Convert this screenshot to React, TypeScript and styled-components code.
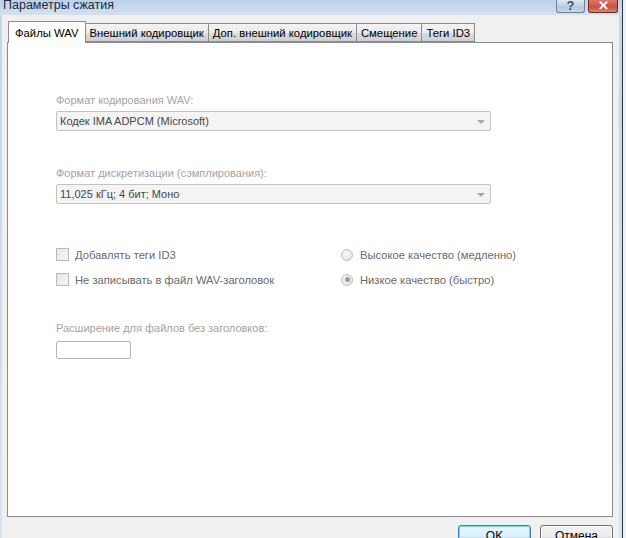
import React from 'react'
import styled, { createGlobalStyle } from 'styled-components'

const GlobalStyle = createGlobalStyle`
  html, body {
    margin: 0;
    padding: 0;
    background: #e8eef6;
  }
  body {
    font-family: "Liberation Sans", Arial, sans-serif;
    font-size: 11px;
  }
`

const Screen = styled.div`
  width: 626px;
  height: 538px;
  overflow: hidden;
  display: flex;
  background: #f4f7fb;
`

const Frame = styled.div`
  width: 622px;
  height: 538px;
  display: flex;
  flex-direction: column;
  background: linear-gradient(180deg, #c3d5ea 0%, #d6e3f2 100%);
  border-right: 1px solid #2b3440;
  flex-shrink: 0;
`

const TitleBar = styled.div`
  height: 15px;
  display: flex;
  align-items: flex-end;
  padding-left: 3px;
  background: linear-gradient(180deg, #bcd0e8 0%, #d3e1f1 100%);
`

const Title = styled.span`
  font-size: 12.5px;
  line-height: 13px;
  color: #1e2a3a;
  flex: 1;
  margin-bottom: 3px;
`

const Caption = styled.div`
  display: flex;
  gap: 3px;
  align-self: flex-start;
  margin-right: 4px;
`

const CaptionButton = styled.div<{ $close?: boolean }>`
  width: ${p => (p.$close ? 30 : 29)}px;
  height: 13px;
  box-sizing: border-box;
  border: 1px solid ${p => (p.$close ? '#6b2a22' : '#6f7f95')};
  border-top: none;
  border-radius: 0 0 3px 3px;
  display: flex;
  align-items: flex-end;
  justify-content: center;
  background: ${p =>
    p.$close
      ? 'linear-gradient(180deg, #d8796c 0%, #c9503f 60%, #d98a70 100%)'
      : 'linear-gradient(180deg, #dfe8f3 0%, #b8c9de 60%, #c8d7e9 100%)'};
  color: ${p => (p.$close ? '#fff' : '#44536a')};
  font-size: 13px;
  line-height: 13px;
  font-weight: bold;
`

const Body = styled.div`
  flex: 1;
  display: flex;
  padding-left: 2px;
  padding-right: 3px;
`

const Client = styled.div`
  flex: 1;
  background: #f0f0f0;
  display: flex;
  flex-direction: column;
  padding: 6px 6px 0 5px;
`

const TabStrip = styled.div`
  display: flex;
  align-items: flex-end;
  height: 21px;
  padding-left: 1px;
  position: relative;
  z-index: 1;
`

const Tab = styled.div<{ $active?: boolean }>`
  box-sizing: border-box;
  height: ${p => (p.$active ? 22 : 19)}px;
  margin-bottom: ${p => (p.$active ? -1 : 0)}px;
  padding: 0 ${p => (p.$active ? 6 : 4)}px;
  margin-left: ${p => (p.$active ? 0 : -1)}px;
  border: 1px solid #898c95;
  border-bottom: ${p => (p.$active ? 'none' : '1px solid #898c95')};
  background: ${p =>
    p.$active ? '#fff' : 'linear-gradient(180deg, #f3f3f3 0%, #ebebeb 50%, #dddddd 51%, #cfcfcf 100%)'};
  display: flex;
  align-items: center;
  color: #000;
  font-size: 11.3px;
  white-space: nowrap;
  &:first-child {
    margin-left: 0;
  }
`

const Panel = styled.div`
  height: 475px;
  box-sizing: border-box;
  background: #fff;
  border: 1px solid #898c95;
  padding: 50px 0 0 48px;
  display: flex;
  flex-direction: column;
`

const FieldLabel = styled.div<{ $gap: number }>`
  margin-top: ${p => p.$gap}px;
  color: #a3a3a3;
  font-size: 11px;
  line-height: 14px;
  height: 14px;
`

const Select = styled.div`
  margin-top: 4px;
  width: 435px;
  height: 20px;
  box-sizing: border-box;
  border: 1px solid #c2c2c2;
  border-radius: 2px;
  background: #f4f4f4;
  display: flex;
  align-items: center;
  padding-left: 3px;
  color: #474747;
  font-size: 11px;
  justify-content: space-between;
`

const Arrow = styled.span`
  width: 0;
  height: 0;
  border-left: 4px solid transparent;
  border-right: 4px solid transparent;
  border-top: 4px solid #a8a8a8;
  margin-right: 5px;
  margin-top: 2px;
`

const Options = styled.div`
  margin-top: 44px;
  display: grid;
  grid-template-columns: 285px auto;
  row-gap: 12px;
`

const Option = styled.div`
  display: flex;
  align-items: center;
  height: 13px;
  gap: 6px;
  color: #6a6a6a;
  font-size: 11.2px;
`

const CheckBox = styled.span`
  width: 13px;
  height: 13px;
  box-sizing: border-box;
  border: 1px solid #b9b9b9;
  background: linear-gradient(135deg, #e6e6e6 0%, #f6f6f6 100%);
  flex-shrink: 0;
`

const Radio = styled.span<{ $checked?: boolean }>`
  width: 12px;
  height: 12px;
  box-sizing: border-box;
  border-radius: 50%;
  border: 1px solid #c0c0c0;
  background: radial-gradient(circle at 40% 40%, #f8f8f8 0%, #dcdcdc 100%);
  display: flex;
  align-items: center;
  justify-content: center;
  flex-shrink: 0;
  margin-right: 1px;
  &::after {
    content: '';
    display: ${p => (p.$checked ? 'block' : 'none')};
    width: 5px;
    height: 5px;
    border-radius: 50%;
    background: #9a9a9a;
  }
`

const TextBox = styled.div`
  margin-top: 6px;
  width: 75px;
  height: 18px;
  box-sizing: border-box;
  border: 1px solid #b5b5b5;
  border-radius: 2px;
  background: #fff;
`

const ButtonRow = styled.div`
  display: flex;
  justify-content: flex-end;
  gap: 9px;
  padding-top: 8px;
`

const Button = styled.div<{ $default?: boolean }>`
  width: 73px;
  height: 23px;
  box-sizing: border-box;
  border: 1px solid ${p => (p.$default ? '#3c7fb1' : '#707070')};
  border-radius: 3px;
  background: ${p =>
    p.$default
      ? 'linear-gradient(180deg, #eaf6fd 0%, #d9f0fc 50%, #bee6fd 51%, #a7d9f5 100%)'
      : 'linear-gradient(180deg, #f2f2f2 0%, #ebebeb 50%, #dddddd 51%, #cfcfcf 100%)'};
  box-shadow: ${p => (p.$default ? 'inset 0 0 0 1px #7fd2f5' : 'inset 0 0 0 1px #fcfcfc')};
  display: flex;
  justify-content: center;
  padding-top: 3px;
  color: #000;
  font-size: 12px;
`

const Outside = styled.div`
  flex: 1;
  background: #eef2f7;
`

const tabs = ['Файлы WAV', 'Внешний кодировщик', 'Доп. внешний кодировщик', 'Смещение', 'Теги ID3']

export default function App() {
  return (
    <>
      <GlobalStyle />
      <Screen>
        <Frame>
          <TitleBar>
            <Title>Параметры сжатия</Title>
            <Caption>
              <CaptionButton>?</CaptionButton>
              <CaptionButton $close>✕</CaptionButton>
            </Caption>
          </TitleBar>
          <Body>
            <Client>
              <TabStrip>
                {tabs.map((t, i) => (
                  <Tab key={t} $active={i === 0}>{t}</Tab>
                ))}
              </TabStrip>
              <Panel>
                <FieldLabel $gap={0}>Формат кодирования WAV:</FieldLabel>
                <Select>
                  Кодек IMA ADPCM (Microsoft)
                  <Arrow />
                </Select>
                <FieldLabel $gap={35}>Формат дискретизации (сэмплирования):</FieldLabel>
                <Select>
                  11,025 кГц; 4 бит; Моно
                  <Arrow />
                </Select>
                <Options>
                  <Option><CheckBox />Добавлять теги ID3</Option>
                  <Option><Radio />Высокое качество (медленно)</Option>
                  <Option><CheckBox />Не записывать в файл WAV-заголовок</Option>
                  <Option><Radio $checked />Низкое качество (быстро)</Option>
                </Options>
                <FieldLabel $gap={35}>Расширение для файлов без заголовков:</FieldLabel>
                <TextBox />
              </Panel>
              <ButtonRow>
                <Button $default>OK</Button>
                <Button>Отмена</Button>
              </ButtonRow>
            </Client>
          </Body>
        </Frame>
        <Outside />
      </Screen>
    </>
  )
}
